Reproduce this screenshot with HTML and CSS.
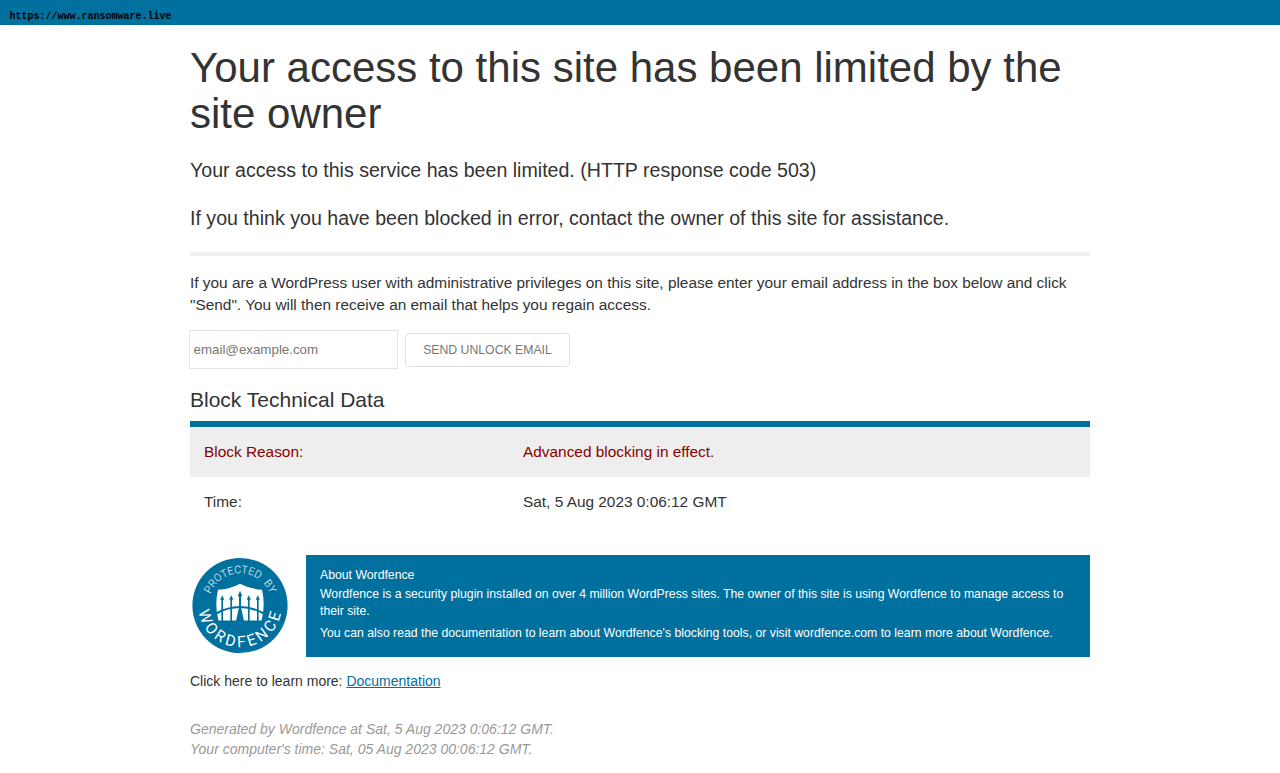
FILE: index.html
```
<!DOCTYPE html>
<html lang="en">
<head>
<meta charset="utf-8">
<title>Your access to this site has been limited by the site owner</title>
<link rel="stylesheet" href="styles.css">
</head>
<body>
<div class="banner">https://www.ransomware.live</div>
<main class="page">
  <h1>Your access to this site has been limited by the site owner</h1>
  <p class="lead">Your access to this service has been limited. (HTTP response code 503)</p>
  <p class="lead">If you think you have been blocked in error, contact the owner of this site for assistance.</p>
  <hr>
  <p class="medium">If you are a WordPress user with administrative privileges on this site, please enter your email address in the box below and click "Send". You will then receive an email that helps you regain access.</p>
  <form class="unlock">
    <input type="text" class="email" placeholder="email@example.com">
    <button type="button" class="send">Send Unlock Email</button>
  </form>
  <h2>Block Technical Data</h2>
  <table class="data">
    <tr class="reason"><th>Block Reason:</th><td>Advanced blocking in effect.</td></tr>
    <tr><th>Time:</th><td>Sat, 5 Aug 2023 0:06:12 GMT</td></tr>
  </table>
  <div class="about">
    <svg class="badge" viewBox="0 0 100 100" width="100" height="100">
      <defs>
        <path id="upper" d="M20.4 38.9A32 32 0 0 1 81 41"/>
        <path id="lower" d="M8.7 56.3A41.7 41.7 0 0 0 91.3 56.3"/>
      </defs>
      <circle cx="50" cy="50.5" r="47.6" fill="#00709e"/>
      <path fill="#fff" d="M28 34.8Q40 34 50 28.7Q60 34 72 34.8Q75.6 50 71.6 65.4H28.4Q24.4 50 28 34.8Z"/>
      <g fill="none" stroke="#00709e">
        <path stroke-width="2" d="M26 58.5Q38 52 50 52T74 58.5"/>
        <path stroke-width="1.7" d="M32.2 43V66M41.2 43V66M58.8 43V66M67.8 43V66"/>
        <path stroke-width="2" d="M50 39V54"/>
      </g>
      <path fill="#00709e" d="M32.2 40.3l2.1 4.4h-4.2zM41.2 40.3l2.1 4.4h-4.2zM50 35.8l2.4 5.4h-4.8zM58.8 40.3l2.1 4.4h-4.2zM67.8 40.3l2.1 4.4h-4.2zM48.8 53h2.4L54 66h-8z"/>
      <text class="badge-top"><textPath href="#upper">PROTECTED BY</textPath></text>
      <text class="badge-bottom"><textPath href="#lower" textLength="117">WORDFENCE</textPath></text>
    </svg>
    <div class="about-text">
      <h3>About Wordfence</h3>
      <p>Wordfence is a security plugin installed on over 4 million WordPress sites. The owner of this site is using Wordfence to manage access to their site.</p>
      <p>You can also read the documentation to learn about Wordfence's blocking tools, or visit wordfence.com to learn more about Wordfence.</p>
    </div>
  </div>
  <p class="learn">Click here to learn more: <a href="#">Documentation</a></p>
  <p class="generated">Generated by Wordfence at Sat, 5 Aug 2023 0:06:12 GMT.<br>Your computer's time: Sat, 05 Aug 2023 00:06:12 GMT.</p>
</main>
</body>
</html>
```
FILE: styles.css
```
* { box-sizing: border-box; }
body {
  margin: 0;
  background: #fff;
  color: #333;
  font: 14px/20px "Liberation Sans", Arial, sans-serif;
  overflow: hidden;
}
.banner {
  height: 25px;
  padding: 7px 0 0 9.5px;
  background: #00709e;
  color: #000;
  font: bold 10px/20px "Liberation Mono", monospace;
}
.page { width: 900px; margin: 0 auto; padding-top: 20px; }
h1, h2, h3 { font-weight: 400; margin: 0; }
h1 { font-size: 42px; line-height: 46px; margin-bottom: 19px; }
p { margin: 0; }
.lead { font-size: 19.6px; line-height: 28px; margin-bottom: 20px; }
hr { height: 4px; margin: 0 0 16px; border: 0; background: #eee; }
.medium { font-size: 15.4px; line-height: 22px; }
.unlock { display: flex; align-items: center; gap: 7px; margin: 14px 0 0 -1px; }
.email {
  width: 209px;
  height: 39px;
  padding: 1px 3.5px;
  border: 1px solid #e3e3e3;
  font: 13.333px "Liberation Sans", Arial, sans-serif;
}
.email::placeholder { color: #757575; }
.send {
  width: 165px;
  height: 34px;
  padding: 0;
  border: 1px solid #e0e0e0;
  border-radius: 4px;
  background: #fff;
  color: #777;
  font: 12.25px "Liberation Sans", Arial, sans-serif;
  text-transform: uppercase;
}
h2 { font-size: 21px; line-height: 24px; margin: 19px 0 9px; }
.data {
  width: 100%;
  border-top: 6px solid #00709e;
  border-spacing: 0;
  table-layout: fixed;
  font-size: 15.4px;
}
.data th, .data td { height: 50px; padding: 0 14px; font-weight: 400; text-align: left; }
.data th { width: 319px; }
.reason { background: #eee; color: #8b0000; }
.about { display: flex; gap: 16px; margin-top: 28px; }
.badge { flex: none; }
.badge-top, .badge-bottom { fill: #fff; font-family: Roboto, sans-serif; }
.badge-top { font-size: 10.6px; font-weight: 300; word-spacing: 3px; }
.badge-bottom { font-size: 15.6px; }
.about-text {
  flex: 1;
  height: 102px;
  padding: 12px 14px;
  background: #00709e;
  color: #fff;
  font-size: 12.25px;
  line-height: 17px;
}
.about-text h3 { font-size: 12.25px; line-height: 16px; margin-bottom: 3px; }
.about-text p { margin-bottom: 5px; }
.learn { margin: 14px 0 28px; }
.learn a { color: #00709e; }
.generated { color: #999; font-style: italic; }
```
